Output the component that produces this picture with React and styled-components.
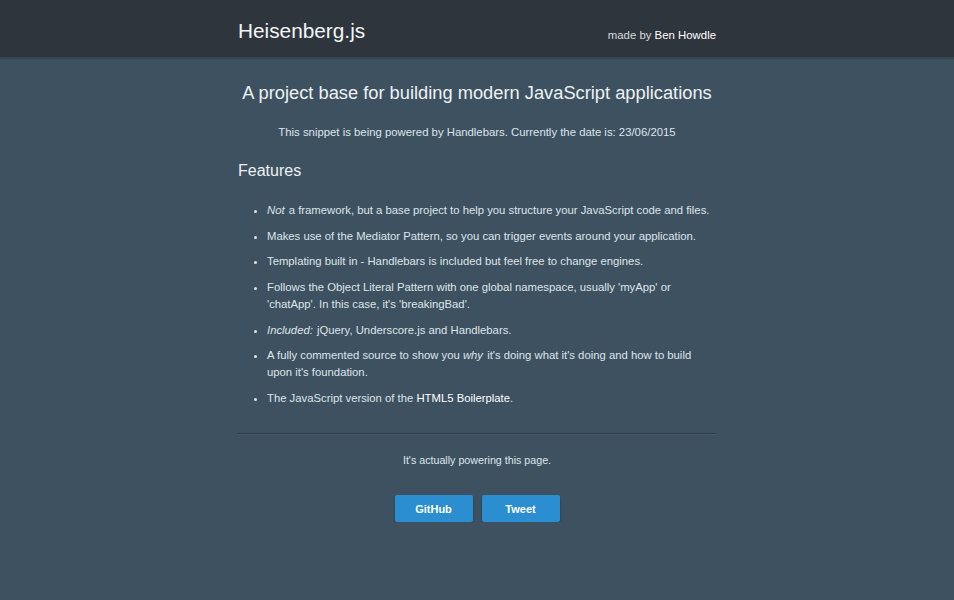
import React from "react";
import styled, { createGlobalStyle } from "styled-components";

const Global = createGlobalStyle`
  html, body { margin: 0; padding: 0; }
  body {
    background: #3d5160;
    font-family: "Liberation Sans", Arial, sans-serif;
    color: #dfe5ea;
  }
`;

const Header = styled.header`
  background: #2f353c;
  border-bottom: 2px solid #384651;
  height: 57px;
`;

const Wrap = styled.div`
  width: 478px;
  margin: 0 auto;
`;

const HeaderInner = styled(Wrap)`
  display: flex;
  align-items: center;
  justify-content: space-between;
  height: 100%;
`;

const Logo = styled.h1`
  margin: 0;
  font-size: 20.8px;
  font-weight: normal;
  color: #f3f5f7;
  position: relative;
  top: 2px;
`;

const Credit = styled.div`
  font-size: 11.4px;
  color: #d6dbdf;
  position: relative;
  top: 6px;
`;

const Link = styled.a`
  color: #ffffff;
  text-decoration: none;
`;

const Main = styled(Wrap)`
  padding-top: 23px;
`;

const Title = styled.h2`
  margin: 0;
  text-align: center;
  font-size: 18.3px;
  font-weight: normal;
  color: #eef1f4;
  white-space: nowrap;
`;

const Lead = styled.p`
  margin: 22px 0 0;
  text-align: center;
  font-size: 11.35px;
`;

const SubTitle = styled.h3`
  margin: 24px 0 0;
  font-size: 16px;
  font-weight: normal;
  color: #eef1f4;
`;

const List = styled.ul`
  margin: 22px 0 0;
  padding: 0 0 0 29px;
  list-style: disc;
`;

const Item = styled.li`
  font-size: 11.3px;
  line-height: 17px;
  margin-bottom: 8.7px;
`;

const Emph = styled.em`
  padding-right: 1px;
`;

const Rule = styled.hr`
  margin: 26px 0 0;
  border: 0;
  border-top: 1px solid #2e3d48;
  border-bottom: 1px solid #465a69;
`;

const Note = styled.p`
  margin: 19px 0 0;
  text-align: center;
  font-size: 10.7px;
`;

const Buttons = styled.div`
  display: flex;
  justify-content: center;
  gap: 9px;
  margin-top: 29px;
`;

const Button = styled.a`
  display: flex;
  align-items: center;
  justify-content: center;
  width: 78px;
  height: 27px;
  background: #2a8ed0;
  border-radius: 2px;
  color: #ffffff;
  font-size: 11px;
  font-weight: bold;
  text-decoration: none;
  box-shadow: 0 2px 2px rgba(20, 30, 40, 0.55);
`;

export default function App() {
  return (
    <>
      <Global />
      <Header>
        <HeaderInner>
          <Logo>Heisenberg.js</Logo>
          <Credit>
            made by <Link href="#">Ben Howdle</Link>
          </Credit>
        </HeaderInner>
      </Header>
      <Main>
        <Title>A project base for building modern JavaScript applications</Title>
        <Lead>
          This snippet is being powered by Handlebars. Currently the date is: 23/06/2015
        </Lead>
        <SubTitle>Features</SubTitle>
        <List>
          <Item>
            <Emph>Not</Emph> a framework, but a base project to help you structure your JavaScript code and files.
          </Item>
          <Item>Makes use of the Mediator Pattern, so you can trigger events around your application.</Item>
          <Item>Templating built in - Handlebars is included but feel free to change engines.</Item>
          <Item>
            Follows the Object Literal Pattern with one global namespace, usually 'myApp' or 'chatApp'. In this case, it's 'breakingBad'.
          </Item>
          <Item>
            <Emph>Included:</Emph> jQuery, Underscore.js and Handlebars.
          </Item>
          <Item>
            A fully commented source to show you <Emph>why</Emph> it's doing what it's doing and how to build upon it's foundation.
          </Item>
          <Item>
            The JavaScript version of the <Link href="#">HTML5 Boilerplate</Link>.
          </Item>
        </List>
        <Rule />
        <Note>It's actually powering this page.</Note>
        <Buttons>
          <Button href="#">GitHub</Button>
          <Button href="#">Tweet</Button>
        </Buttons>
      </Main>
    </>
  );
}
